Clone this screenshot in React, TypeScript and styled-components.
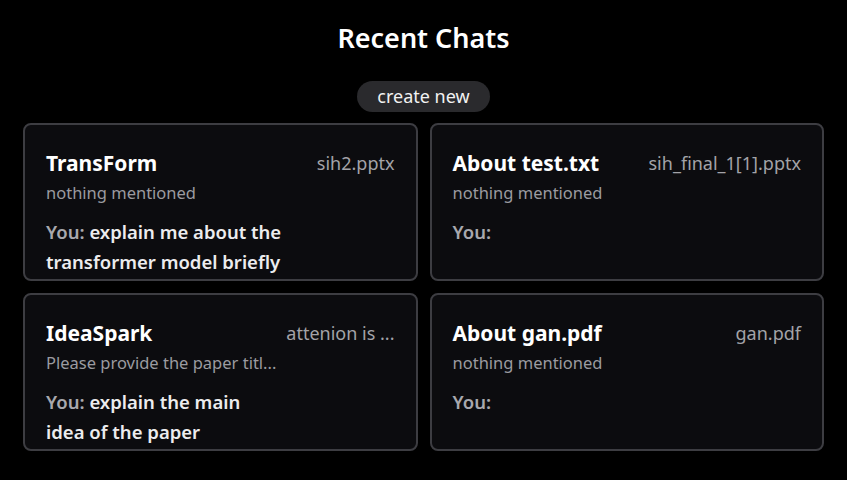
import React from 'react';
import styled, { createGlobalStyle } from 'styled-components';

const GlobalStyle = createGlobalStyle`
  html, body {
    margin: 0;
    padding: 0;
    background: #000;
  }
  body {
    font-family: "Noto Sans", "Open Sans", sans-serif;
    color: #fff;
  }
`;

const Page = styled.div`
  width: 847px;
  height: 480px;
  box-sizing: border-box;
  padding: 18px 23px 0;
  display: flex;
  flex-direction: column;
  align-items: center;
`;

const Heading = styled.h1`
  margin: 0;
  font-size: 27px;
  font-weight: 600;
  line-height: 40px;
  color: #fff;
`;

const CreateButton = styled.button`
  margin-top: 23px;
  height: 31px;
  padding: 0 20px;
  border: none;
  border-radius: 16px;
  background: #2a2a2d;
  color: #f2f2f2;
  font-family: inherit;
  font-size: 18px;
  line-height: 31px;
  cursor: pointer;
`;

const Grid = styled.div`
  margin-top: 11px;
  width: 100%;
  display: grid;
  grid-template-columns: 1fr 1fr;
  gap: 12px;
`;

const Card = styled.div`
  height: 158px;
  box-sizing: border-box;
  padding: 21px 21px 0;
  border: 2px solid #3d3d42;
  border-radius: 8px;
  background: #0c0c0f;
  display: flex;
  flex-direction: column;
`;

const Header = styled.div`
  display: flex;
  align-items: center;
  justify-content: space-between;
  gap: 12px;
`;

const Title = styled.div`
  font-size: 21px;
  font-weight: 700;
  line-height: 34px;
  color: #fff;
  white-space: nowrap;
`;

const DocName = styled.div`
  font-size: 18px;
  line-height: 34px;
  color: #a3a3a8;
  white-space: nowrap;
`;

const Summary = styled.div`
  font-size: 16.5px;
  line-height: 26px;
  color: #9b9ba0;
  white-space: nowrap;
`;

const Message = styled.div`
  margin-top: 11px;
  max-width: 236px;
  font-size: 18.5px;
  line-height: 30px;
  font-weight: 600;
  color: #ececee;
`;

const You = styled.span`
  color: #a8a8ad;
`;

interface Chat {
  title: string;
  doc: string;
  summary: string;
  message: string;
}

const chats: Chat[] = [
  {
    title: 'TransForm',
    doc: 'sih2.pptx',
    summary: 'nothing mentioned',
    message: 'explain me about the transformer model briefly',
  },
  {
    title: 'About test.txt',
    doc: 'sih_final_1[1].pptx',
    summary: 'nothing mentioned',
    message: '',
  },
  {
    title: 'IdeaSpark',
    doc: 'attenion is ...',
    summary: 'Please provide the paper titl...',
    message: 'explain the main idea of the paper',
  },
  {
    title: 'About gan.pdf',
    doc: 'gan.pdf',
    summary: 'nothing mentioned',
    message: '',
  },
];

const ChatCard = ({ chat }: { chat: Chat }) => (
  <Card>
    <Header>
      <Title>{chat.title}</Title>
      <DocName>{chat.doc}</DocName>
    </Header>
    <Summary>{chat.summary}</Summary>
    <Message>
      <You>You: </You>
      {chat.message}
    </Message>
  </Card>
);

export default function App() {
  return (
    <>
      <GlobalStyle />
      <Page>
        <Heading>Recent Chats</Heading>
        <CreateButton>create new</CreateButton>
        <Grid>
          {chats.map(chat => (
            <ChatCard key={chat.title} chat={chat} />
          ))}
        </Grid>
      </Page>
    </>
  );
}
